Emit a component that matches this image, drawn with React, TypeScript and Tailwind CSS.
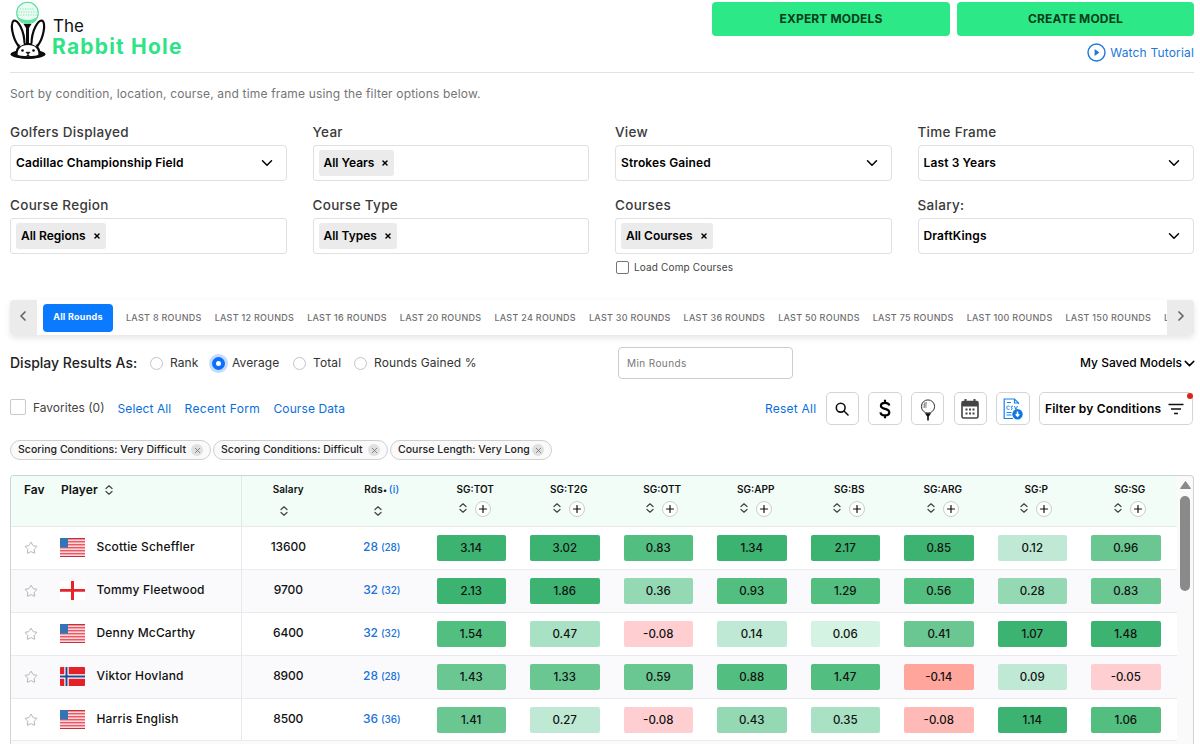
import React from "react";
import { ChevronDown, ChevronLeft, ChevronRight, Plus, Star, X } from "lucide-react";

function RabbitLogo() {
  return (
    <svg width="38" height="60" viewBox="0 0 38 60" className="shrink-0" fill="none">
      <circle cx="17.5" cy="13" r="10.8" fill="#e9fbf2" stroke="#52dc99" strokeWidth="1.100" />
      <g stroke="#7be8b4" strokeWidth="1" strokeDasharray="1.2 1.3">
        <path d="M10 9h15M8.500 12h18M8 15h19" />
      </g>
      <path d="M7.500 16.500c1.500 9 18.500 9 20 0c-4 4.500-16 4.500-20 0z" fill="#62e3a5" />
      <path d="M13.500 24h8l-2.500 4v16h-3V28z" fill="#0b0b0b" />
      <ellipse cx="18" cy="54.300" rx="17.400" ry="4.600" fill="#0b0b0b" />
      <g stroke="#0b0b0b" strokeWidth="2.200" fill="#fff" strokeLinejoin="round">
        <path d="M8.500 46C2.500 38 0 24 3.500 20.800C7.500 19 14.500 30 14.500 44.500z" />
        <path d="M27.500 46C33.500 38 36 24 32.500 20.800C28.500 19 21.500 30 21.500 44.500z" />
        <path d="M6.500 55.500C6 48.500 10 44 18 44S30 48.500 29.500 55.500C26 58 10 58 6.500 55.500z" />
      </g>
      <path d="M9.500 46.500L14 44.300L12 40zM26.500 46.500L22 44.300L24 40z" fill="#fff" />
      <circle cx="12.500" cy="50.500" r="1.300" fill="#0b0b0b" />
      <circle cx="23.500" cy="50.500" r="1.300" fill="#0b0b0b" />
      <path d="M16 52.300h4l-2 2zM18 54v1.500M15.800 56.500l2.200-1.300l2.200 1.300" stroke="#0b0b0b" strokeWidth="0.900" fill="#0b0b0b" />
    </svg>
  );
}

function Label({ children }: { children: React.ReactNode }) {
  return <div className="h-[26px] pt-px text-[13.5px] leading-[24px] font-medium tracking-[0.3px] text-[#3a3a3a]">{children}</div>;
}

function SelectField({ label, value }: { label: string; value: string }) {
  return (
    <div>
      <Label>{label}</Label>
      <div className="flex h-9 items-center justify-between rounded border border-[#e0e0e0] pr-[10px] pl-[5px] text-[12px] font-semibold text-black">
        <span className="tracking-[0.130px]">{value}</span>
        <ChevronDown size={18} strokeWidth={2} />
      </div>
    </div>
  );
}

function TagField({ label, value }: { label: string; value: string }) {
  return (
    <div>
      <Label>{label}</Label>
      <div className="flex h-9 items-center rounded-[3px] border border-[#e0e0e0] pl-[5px]">
        <span className="flex h-[26px] items-center gap-[7px] rounded-[3px] bg-[#ebebeb] pr-[5px] pl-[5px] text-[12px] font-semibold text-black">
          {value}
          <X size={8} strokeWidth={4.5} />
        </span>
      </div>
    </div>
  );
}

const rounds = [8, 12, 16, 20, 24, 30, 36, 50, 75, 100, 150];

function Radio({ label, on, className }: { label: string; on?: boolean; className: string }) {
  return (
    <span className={"flex items-center gap-[7px] tracking-[0.1px] " + className}>
      <span
        className={
          on
            ? "h-[13px] w-[13px] rounded-full border-[4px] border-[#0d6efd] bg-white shadow-[0_0_0_3px_#c2dbfe]"
            : "h-[13px] w-[13px] rounded-full border border-[#c4c4c4] bg-white"
        }
      />
      {label}
    </span>
  );
}

function Chip({ children, className }: { children: string; className: string }) {
  return (
    <span className={"flex h-5 items-center justify-between rounded-full border border-[#cfcfcf] bg-[#fafafa] pr-[7px] pb-px pl-[7px] text-[10.5px] font-medium whitespace-nowrap text-[#222] " + className}>
      <span className="tracking-[0.030px]">{children}</span>
      <span className="mt-px flex h-3 w-3 shrink-0 items-center justify-center rounded-full bg-[#e0e0e0]">
        <X size={9} strokeWidth={2} color="#666" />
      </span>
    </span>
  );
}

function IconButton({ children }: { children: React.ReactNode }) {
  return <span className="flex h-[33px] w-[33.500px] shrink-0 items-center justify-center rounded-[5px] border border-[#d4d4d4] bg-white">{children}</span>;
}

function SortIcon() {
  return (
    <svg width="8" height="10" viewBox="0 0 8 10" fill="none" stroke="#444" strokeWidth="1.200" strokeLinecap="round" strokeLinejoin="round">
      <path d="M1 3.500L4 0.800L7 3.500M1 6.500L4 9.200L7 6.500" />
    </svg>
  );
}

function Flag({ country }: { country: string }) {
  if (country === "us")
    return (
      <svg width="25" height="19" viewBox="0 0 25 19">
        <rect width="25" height="19" rx="1" fill="#fbd5d9" />
        {[0, 3, 6, 9, 12, 15, 18].map((y) => (
          <rect key={y} y={y} width="25" height="1.400" fill={y === 0 || y === 18 ? "#c4303b" : "#ea5964"} />
        ))}
        <rect width="8" height="9.500" fill="#3274b5" />
      </svg>
    );
  if (country === "no")
    return (
      <svg width="25" height="19" viewBox="0 0 25 19">
        <rect width="25" height="19" rx="1" fill="#e32129" />
        <path d="M4.300 0h4.400v19h-4.400zM0 7.200h25v4.600h-25z" fill="#fff" />
        <path d="M5.500 0h2v19h-2zM0 8.500h25v2h-25z" fill="#1f4c96" />
      </svg>
    );
  return (
    <svg width="25" height="19" viewBox="0 0 25 19">
      <rect width="25" height="19" fill="#fff" />
      <path d="M11 0h3v19h-3zM0 8h25v2.800h-25z" fill="#e6252b" />
    </svg>
  );
}

const G1 = "bg-[#3cb371]";
const G2 = "bg-[#52be80]";
const G3 = "bg-[#6ac792]";
const G4 = "bg-[#94d9b4]";
const G5 = "bg-[#a9e1c4]";
const G6 = "bg-[#bfe9d4]";
const G7 = "bg-[#d5f3e3]";
const R1 = "bg-[#ffced1]";
const R2 = "bg-[#ffb9b7]";
const R3 = "bg-[#ffa59c]";

const stats = ["SG:TOT", "SG:T2G", "SG:OTT", "SG:APP", "SG:BS", "SG:ARG", "SG:P", "SG:SG"];

type Row = { name: string; flag: string; salary: string; rds: string; cells: [string, string][] };

const rows: Row[] = [
  { name: "Scottie Scheffler", flag: "us", salary: "13600", rds: "28", cells: [["3.14", G1], ["3.02", G1], ["0.83", G2], ["1.34", G1], ["2.17", G1], ["0.85", G1], ["0.12", G6], ["0.96", G3]] },
  { name: "Tommy Fleetwood", flag: "en", salary: "9700", rds: "32", cells: [["2.13", G1], ["1.86", G1], ["0.36", G4], ["0.93", G2], ["1.29", G2], ["0.56", G2], ["0.28", G4], ["0.83", G3]] },
  { name: "Denny McCarthy", flag: "us", salary: "6400", rds: "32", cells: [["1.54", G2], ["0.47", G5], ["-0.08", R1], ["0.14", G6], ["0.06", G7], ["0.41", G3], ["1.07", G1], ["1.48", G1]] },
  { name: "Viktor Hovland", flag: "no", salary: "8900", rds: "28", cells: [["1.43", G3], ["1.33", G3], ["0.59", G3], ["0.88", G2], ["1.47", G2], ["-0.14", R3], ["0.09", G6], ["-0.05", R1]] },
  { name: "Harris English", flag: "us", salary: "8500", rds: "36", cells: [["1.41", G3], ["0.27", G6], ["-0.08", R1], ["0.43", G4], ["0.35", G5], ["-0.08", R2], ["1.14", G1], ["1.06", G2]] },
];

function StatsTable() {
  return (
    <div className="mt-[15px] flex h-[275px] overflow-hidden rounded-t-[4px] border-x border-t border-[#cfd4d4] bg-[#fafafa]">
      <div className="w-[1166px] shrink-0">
        <div className="flex h-[51px] border-b border-[#e6ebe9] bg-[#f2fdf8] text-[10px] font-semibold text-[#111]">
          <div className="flex w-[230.500px] shrink-0 border-r border-[#e3e8e6] pt-[6px] pl-[13px] text-[12px] leading-[16px]">
            <span className="w-[37px]">Fav</span>
            <span className="mr-[7px] tracking-[0.1px]">Player</span>
            <span className="pt-[3px]"><SortIcon /></span>
          </div>
          <div className="w-[93.500px] text-center">
            <div className="h-[30px] pt-[6px] leading-[15px] tracking-[0.1px]">Salary</div>
            <div className="flex justify-center pr-2"><SortIcon /></div>
          </div>
          <div className="w-[93.500px] text-center">
            <div className="h-[30px] pt-[6px] leading-[15px] tracking-[0.2px]">Rds<span className="text-[8px]">•</span> <span className="-ml-px font-medium text-[#0a6ee0]">(i)</span></div>
            <div className="flex justify-center pr-2"><SortIcon /></div>
          </div>
          {stats.map((s) => (
            <div key={s} className="w-[93.500px] text-center">
              <div className="h-[25px] pt-[6px] leading-[15px]">{s}</div>
              <div className="flex items-center justify-center gap-2">
                <span className="-mt-0.5"><SortIcon /></span>
                <span className="flex h-4 w-4 items-center justify-center rounded-full border border-[#c9cfcc] bg-white">
                  <Plus size={12} strokeWidth={2.400} className="shrink-0" />
                </span>
              </div>
            </div>
          ))}
        </div>
        {rows.map((r, i) => (
          <div key={r.name} className={"flex h-[42.900px] items-center border-b border-[#ebebef] text-[12px] font-medium text-[#111] " + (i % 2 ? "bg-[#fafafd]" : "bg-white")}>
            <div className="flex h-full w-[230.500px] shrink-0 items-center border-r border-[#e8e8ec] pl-[13px]">
              <Star size={14} strokeWidth={1.500} color="#aaa" className="mr-[22px]" />
              <span className="w-[36.500px]"><Flag country={r.flag} /></span>
              <span className="pb-px tracking-[0.180px]">{r.name}</span>
            </div>
            <div className="w-[93.500px] pb-px text-center tracking-[-0.1px]">{r.salary}</div>
            <div className="w-[93.500px] pb-px text-center text-[#1a73d9] tracking-[-0.1px]">
              {r.rds} <span className="text-[10px]">({r.rds})</span>
            </div>
            {r.cells.map(([v, c], j) => (
              <div key={j} className="w-[93.500px] pl-[8px]">
                <div className={"h-[26px] w-[69.500px] rounded-[2px] text-center text-[11.5px] leading-[26px] " + c}>{v}</div>
              </div>
            ))}
          </div>
        ))}
      </div>
      <div className="flex flex-1 flex-col items-center pt-[5px]">
        <svg width="11" height="8" viewBox="0 0 11 8"><path d="M5.500 0.500L10.500 7.500H0.500z" fill="#8a8a8a" stroke="#8a8a8a" strokeLinejoin="round" /></svg>
        <div className="mt-[7px] h-[95px] w-[9.500px] rounded-full bg-[#8a8a8a]" />
      </div>
    </div>
  );
}

export default function App() {
  return (
    <div className="h-[744px] w-[1200px] overflow-hidden bg-white pr-[6px] pl-[10px] font-['Inter',sans-serif]">
      <header className="flex h-[73px] justify-between border-b border-[#e2e2e2]">
        <div className="flex">
          <RabbitLogo />
          <div className="pt-[16px] pl-[4px]">
            <div className="pl-px text-[17px] leading-[20px] text-[#111]">The</div>
            <div className="text-[21px] leading-[22px] font-bold tracking-[1.2px] text-[#2fe387]">Rabbit Hole</div>
          </div>
        </div>
        <div className="pt-[2px]">
          <div className="flex gap-[7px] text-[12px] font-bold tracking-[0.150px] text-[#063d1c]">
            <button className="h-[34px] w-[238px] rounded-[4px] bg-[#2de886]">EXPERT MODELS</button>
            <button className="h-[34px] w-[237px] rounded-[4px] bg-[#2de886]">CREATE MODEL</button>
          </div>
          <div className="mt-[7px] flex items-center justify-end gap-[4px] text-[12px] text-[#2079d8]">
            <svg width="19" height="19" viewBox="0 0 19 19" fill="none">
              <circle cx="9.500" cy="9.500" r="8.500" stroke="#1a78e0" strokeWidth="1.400" />
              <path d="M7.600 6L12.400 9.500L7.600 13z" fill="#1a78e0" />
            </svg>
            <span className="tracking-[0.170px]">Watch Tutorial</span>
          </div>
        </div>
      </header>

      <p className="mt-[12px] h-[34px] text-[12px] leading-[17px] tracking-[0.170px] text-[#757575]">
        <span>Sort by condition, location, course, and time frame using the filter options below.</span>
      </p>

      <section className="grid grid-cols-4 gap-x-[26px] gap-y-[11px]">
        <SelectField label="Golfers Displayed" value="Cadillac Championship Field" />
        <TagField label="Year" value="All Years" />
        <SelectField label="View" value="Strokes Gained" />
        <SelectField label="Time Frame" value="Last 3 Years" />
        <TagField label="Course Region" value="All Regions" />
        <TagField label="Course Type" value="All Types" />
        <TagField label="Courses" value="All Courses" />
        <SelectField label="Salary:" value="DraftKings" />
      </section>

      <div className="mt-[5px] flex h-[16px] items-center gap-[5px] pl-[606px] text-[10px] tracking-[0.150px] text-[#444]">
        <span className="h-[13px] w-[13px] rounded-[2px] border border-[#767676]" />
        <span>Load Comp Courses</span>
      </div>

      <nav className="mt-[25px] flex h-[35px] overflow-hidden rounded-[4px] shadow-[0_3px_6px_rgba(0,0,0,0.1)]">
        <span className="flex w-[27px] shrink-0 items-center justify-center bg-[#ebebeb] pr-0.5 pb-[3px] text-[#666]"><ChevronLeft size={16} strokeWidth={2.600} /></span>
        <div className="flex w-[1130px] shrink-0 items-center gap-[13px] overflow-hidden pl-[6px] text-[9px] font-medium tracking-[0.270px] whitespace-nowrap text-[#6f6f6f]">
          <span className="flex h-[28px] w-[70px] shrink-0 items-center justify-center rounded-[4px] bg-[#0a7bff] pb-px font-bold text-white">All Rounds</span>
          {rounds.map((n) => (
            <span key={n} className="pt-px">LAST {n} ROUNDS</span>
          ))}
          <span className="pt-px">L</span>
        </div>
        <span className="flex w-[27px] shrink-0 items-center justify-center bg-[#ebebeb] pb-[3px] text-[#666]"><ChevronRight size={16} strokeWidth={2.600} /></span>
      </nav>

      <div className="mt-[12px] flex h-8 items-center text-[12px] text-[#333]">
        <span className="w-[140px] pb-px text-[14px] font-medium text-[#222]"><span>Display Results As:</span></span>
        <Radio label="Rank" className="w-[62px]" />
        <Radio label="Average" on className="w-[81px]" />
        <Radio label="Total" className="w-[61px]" />
        <Radio label="Rounds Gained %" className="w-[264px]" />
        <span className="flex h-8 w-[175px] items-center rounded-[4px] border border-[#cdcdcd] pl-2 text-[10px] tracking-[0.4px] text-[#777]">Min Rounds</span>
        <span className="ml-auto flex items-center text-[12px] font-medium text-black">
          <span>My Saved Models</span> <ChevronDown size={17} strokeWidth={2.1} className="-mr-[4px] -ml-px" />
        </span>
      </div>

      <div className="mt-[13px] flex h-[33px] items-center text-[12px] text-[#0a6fdd]">
        <span className="mr-[7px] -mt-[3px] h-4 w-4 rounded-[2px] border border-[#c9c9c9]" />
        <span className="w-[84.500px] pb-px text-[#444]">Favorites (0)</span>
        <span className="w-[67px] tracking-[0.1px]">Select All</span>
        <span className="w-[89px] tracking-[0.350px]">Recent Form</span>
        <span className="tracking-[0.1px]">Course Data</span>
        <div className="ml-auto flex items-center gap-[9.2px]">
          <span className="tracking-[0.230px]">Reset All</span>
          <IconButton>
            <svg width="14" height="14" viewBox="0 0 14 14" fill="none" stroke="#111" strokeWidth="1.600" strokeLinecap="round"><circle cx="5.700" cy="5.700" r="4.400" /><path d="M9 9l4 4" /></svg>
          </IconButton>
          <IconButton>
            <svg width="12" height="20" viewBox="0 0 12 20" fill="none" stroke="#000" strokeWidth="2.200"><path d="M10.300 6.500C10 4.500 8.500 3.800 6 3.800S1.900 4.800 1.900 6.700S3.500 9.300 6 9.900S10.300 11.500 10.300 13.400S8.500 16.300 6 16.300S1.700 15.500 1.500 13.300M6 0.800v3M6 16.300v3" /></svg>
          </IconButton>
          <IconButton>
            <svg width="16" height="22" viewBox="0 0 16 22" fill="none" className="mt-0.5">
              <circle cx="8" cy="7.500" r="6.600" stroke="#333" strokeWidth="1" />
              <path d="M2.500 6h4M2.500 8h3M4 4h3M6 3v6M4.500 4v5" stroke="#777" strokeWidth="0.700" />
              <path d="M4.800 14.300h6.400L8.800 17.500V21.500H7.200V17.500z" fill="#111" />
            </svg>
          </IconButton>
          <IconButton>
            <svg width="18" height="20" viewBox="0 0 18 20" fill="none">
              <path d="M4.500 0v4M13.500 0v4" stroke="#444" strokeWidth="2" />
              <rect x="1" y="2.500" width="16" height="16.500" rx="1.500" stroke="#444" strokeWidth="1.600" />
              <path d="M1 3h16v4.500H1z" fill="#444" />
              <path d="M4.500 10.500h2M8 10.500h2M11.500 10.500h2M4.500 14.500h2M8 14.500h2M11.500 14.500h2" stroke="#444" strokeWidth="2" />
            </svg>
          </IconButton>
          <IconButton>
            <svg width="20" height="22" viewBox="0 0 20 22" fill="none" stroke="#1681ec">
              <path d="M15.500 6V5L11.500 1H1.200V20.500H10M11.500 1v4h4" strokeWidth="1.200" />
              <path d="M4 4.500h4M3.500 14.500h5M3.500 17h5" strokeWidth="1.200" />
              <path d="M6.500 8.500C5 7.300 3.800 8 3.800 9.700S5 12 6.500 11M10 8.500C8.500 7.500 7.700 8.500 8.500 9.500S10 11.500 8 11.300M11.500 8l1.300 3.500L14.500 8" strokeWidth="1" />
              <circle cx="14.500" cy="16.300" r="5.200" fill="#1276e0" stroke="none" />
              <path d="M14.500 13.500v4M12.700 16.300l1.800 1.800l1.800-1.800" stroke="#fff" strokeWidth="1.500" />
            </svg>
          </IconButton>
          <span className="relative mr-px flex h-[33px] w-[154px] items-center justify-between rounded-[5px] border border-[#d4d4d4] pr-[8px] pl-[5px] font-semibold text-black">
            <span className="tracking-[0.180px]">Filter by Conditions</span>
            <svg width="16" height="12" viewBox="0 0 16 12" stroke="#111" strokeWidth="1.700"><path d="M0.500 1.500h15M3 6h10M6 10.500h4" /></svg>
            <span className="absolute top-0 -right-px h-[6px] w-[6px] rounded-full bg-[#d9261c]" />
          </span>
        </div>
      </div>

      <div className="mt-[15px] flex gap-[2px]">
        <Chip className="w-[201px]">Scoring Conditions: Very Difficult</Chip>
        <Chip className="w-[175px]">Scoring Conditions: Difficult</Chip>
        <Chip className="w-[162px]">Course Length: Very Long</Chip>
      </div>

      <StatsTable />
    </div>
  );
}
